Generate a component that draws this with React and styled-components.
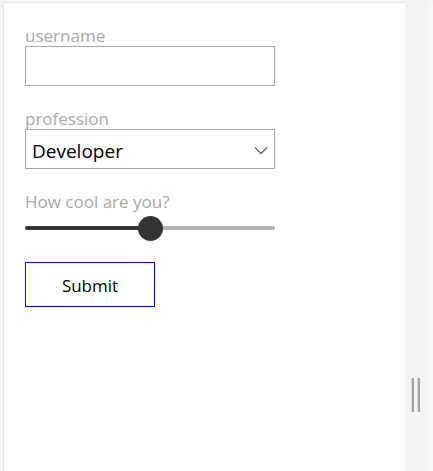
import React, { useState } from 'react';
import styled, { createGlobalStyle } from 'styled-components';

const GlobalStyle = createGlobalStyle`
  html, body {
    margin: 0;
    padding: 0;
    height: 100%;
    font-family: "Open Sans", "Noto Sans", sans-serif;
  }
  #root {
    height: 100%;
  }
`;

const Frame = styled.div`
  display: flex;
  height: 100vh;
  box-sizing: border-box;
  padding: 2px 0 0 3px;
  background: #f4f4f4;
`;

const Panel = styled.main`
  width: 402px;
  box-sizing: border-box;
  background: #fff;
  border-left: 1px solid #e2e2e2;
  border-top: 1px solid #e6e6e6;
  padding: 21px 0 0 21px;
`;

const Sidebar = styled.aside`
  flex: 1;
  display: flex;
  align-items: flex-start;
  padding: 376px 0 0 6px;
  background: #f2f3f5;
  border-right: 5px solid #f8f8f9;
`;

const Grip = styled.div`
  display: flex;
  gap: 3px;
  height: 34px;
`;

const GripBar = styled.span`
  width: 2px;
  height: 100%;
  background: #a3a3a3;
  border-left: 1px solid #d8d8d8;
`;

const Form = styled.form`
  display: flex;
  flex-direction: column;
  width: 250px;
`;

const Field = styled.div`
  display: flex;
  flex-direction: column;
  margin-bottom: ${(p) => p.gap ?? 21}px;
`;

const Label = styled.label`
  font-size: 17px;
  line-height: 22px;
  padding-top: 1px;
  margin-bottom: -1px;
  color: #a9a9a9;
`;

const TextInput = styled.input`
  box-sizing: border-box;
  width: 250px;
  height: 40px;
  margin: 0;
  border: 1px solid #a6a6a6;
  padding: 0 6px;
  font: inherit;
  font-size: 19px;
  outline: none;
`;

const SelectWrap = styled.div`
  position: relative;
  width: 250px;
  height: 40px;
`;

const Select = styled.select`
  box-sizing: border-box;
  width: 250px;
  height: 40px;
  margin: 0;
  border: 1px solid #a6a6a6;
  border-radius: 0;
  padding: 3px 6px 0;
  appearance: none;
  background: #fff;
  font: inherit;
  font-size: 19px;
  color: #000;
  outline: none;
`;

const Chevron = styled.svg`
  position: absolute;
  right: 7px;
  top: 17px;
  pointer-events: none;
`;

const Range = styled.input`
  appearance: none;
  width: 250px;
  height: 4px;
  margin: 14px 0 0;
  border-radius: 2px;
  outline: none;

  &::-webkit-slider-thumb {
    appearance: none;
    width: 25px;
    height: 25px;
    border-radius: 50%;
    background: #333;
    border: none;
  }
`;

const SubmitButton = styled.button`
  width: 130px;
  height: 45px;
  margin: 0;
  padding-top: 2px;
  background: #fff;
  border: 1px solid #0000ff;
  font: inherit;
  font-size: 17px;
  color: #000;
`;

const App = () => {
  const [cool, setCool] = useState(50);
  return (
    <>
      <GlobalStyle />
      <Frame>
        <Panel>
          <Form onSubmit={(e) => e.preventDefault()}>
            <Field>
              <Label htmlFor="username">username</Label>
              <TextInput id="username" type="text" />
            </Field>
            <Field>
              <Label htmlFor="profession">profession</Label>
              <SelectWrap>
                <Select id="profession" defaultValue="developer">
                  <option value="developer">Developer</option>
                  <option value="designer">Designer</option>
                  <option value="manager">Manager</option>
                </Select>
                <Chevron width="14" height="9" viewBox="0 0 14 9">
                  <path d="M1 1.5l6 6 6-6" fill="none" stroke="#666" strokeWidth="1.4" />
                </Chevron>
              </SelectWrap>
            </Field>
            <Field gap={32}>
              <Label htmlFor="cool">How cool are you?</Label>
              <Range
                id="cool"
                type="range"
                min="0"
                max="100"
                value={cool}
                onChange={(e) => setCool(e.target.value)}
                style={{
                  background: `linear-gradient(to right, #333 ${cool}%, #b3b3b3 ${cool}%)`,
                }}
              />
            </Field>
            <SubmitButton type="submit">Submit</SubmitButton>
          </Form>
        </Panel>
        <Sidebar>
          <Grip>
            <GripBar />
            <GripBar />
          </Grip>
        </Sidebar>
      </Frame>
    </>
  );
};

export default App;
